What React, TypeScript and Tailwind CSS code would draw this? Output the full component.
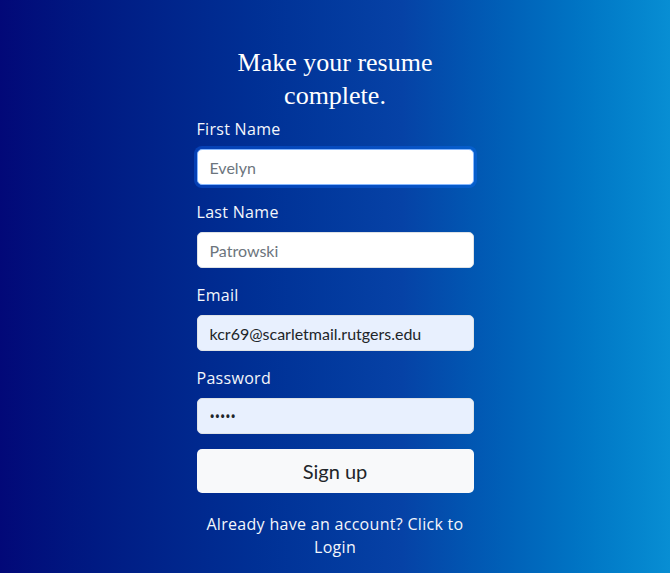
import React from "react";

function Field({
  label,
  type = "text",
  placeholder,
  value,
  filled,
  focused,
}: {
  label: string;
  type?: string;
  placeholder?: string;
  value?: string;
  filled?: boolean;
  focused?: boolean;
}) {
  return (
    <div className="flex flex-col">
      <label className="text-[16px] leading-5 tracking-[0.3px] text-[#f4f6fb] mb-[10px] font-['Open_Sans',sans-serif]">
        {label}
      </label>
      <input
        type={type}
        placeholder={placeholder}
        defaultValue={value}
        className={`h-[36px] w-full rounded-[5px] px-3 text-[#212529] placeholder:text-[#6c757d] outline-none ${
          type === "password"
            ? "text-[14px] font-['Noto_Sans',sans-serif]"
            : "text-[16px] font-['Lato',sans-serif]"
        } ${filled ? "bg-[#e8f0fe]" : "bg-white"} ${
          focused
            ? "border border-[#86b7fe] shadow-[0_0_0_3px_rgba(13,110,253,0.35)]"
            : "border border-[#dee2e6]"
        }`}
      />
    </div>
  );
}

export default function App() {
  return (
    <div className="min-h-[573px] w-full bg-linear-to-r from-[#020878] via-[#0642a6] via-60% to-[#088ed3] flex justify-center">
      <div className="w-[277px] pt-[46px] flex flex-col">
        <h1 className="text-center text-white text-[26px] leading-[33px] font-['Liberation_Serif',serif] mb-[7px]">
          Make your resume
          <br />
          complete.
        </h1>
        <form className="flex flex-col gap-[17px]" onSubmit={(e) => e.preventDefault()}>
          <Field label="First Name" placeholder="Evelyn" focused />
          <Field label="Last Name" placeholder="Patrowski" />
          <Field label="Email" value="kcr69@scarletmail.rutgers.edu" filled />
          <Field label="Password" type="password" value="12345" filled />
          <button
            type="submit"
            className="-mt-[2px] h-[44px] w-full rounded-[5px] bg-[#f8f9fa] text-[20px] text-[#212529] font-['Lato',sans-serif]"
          >
            Sign up
          </button>
        </form>
        <p className="mt-[20px] text-center text-[#f4f6fb] text-[16px] leading-[23px] tracking-[0.3px] font-['Open_Sans',sans-serif]">
          Already have an account? Click to Login
        </p>
      </div>
    </div>
  );
}
